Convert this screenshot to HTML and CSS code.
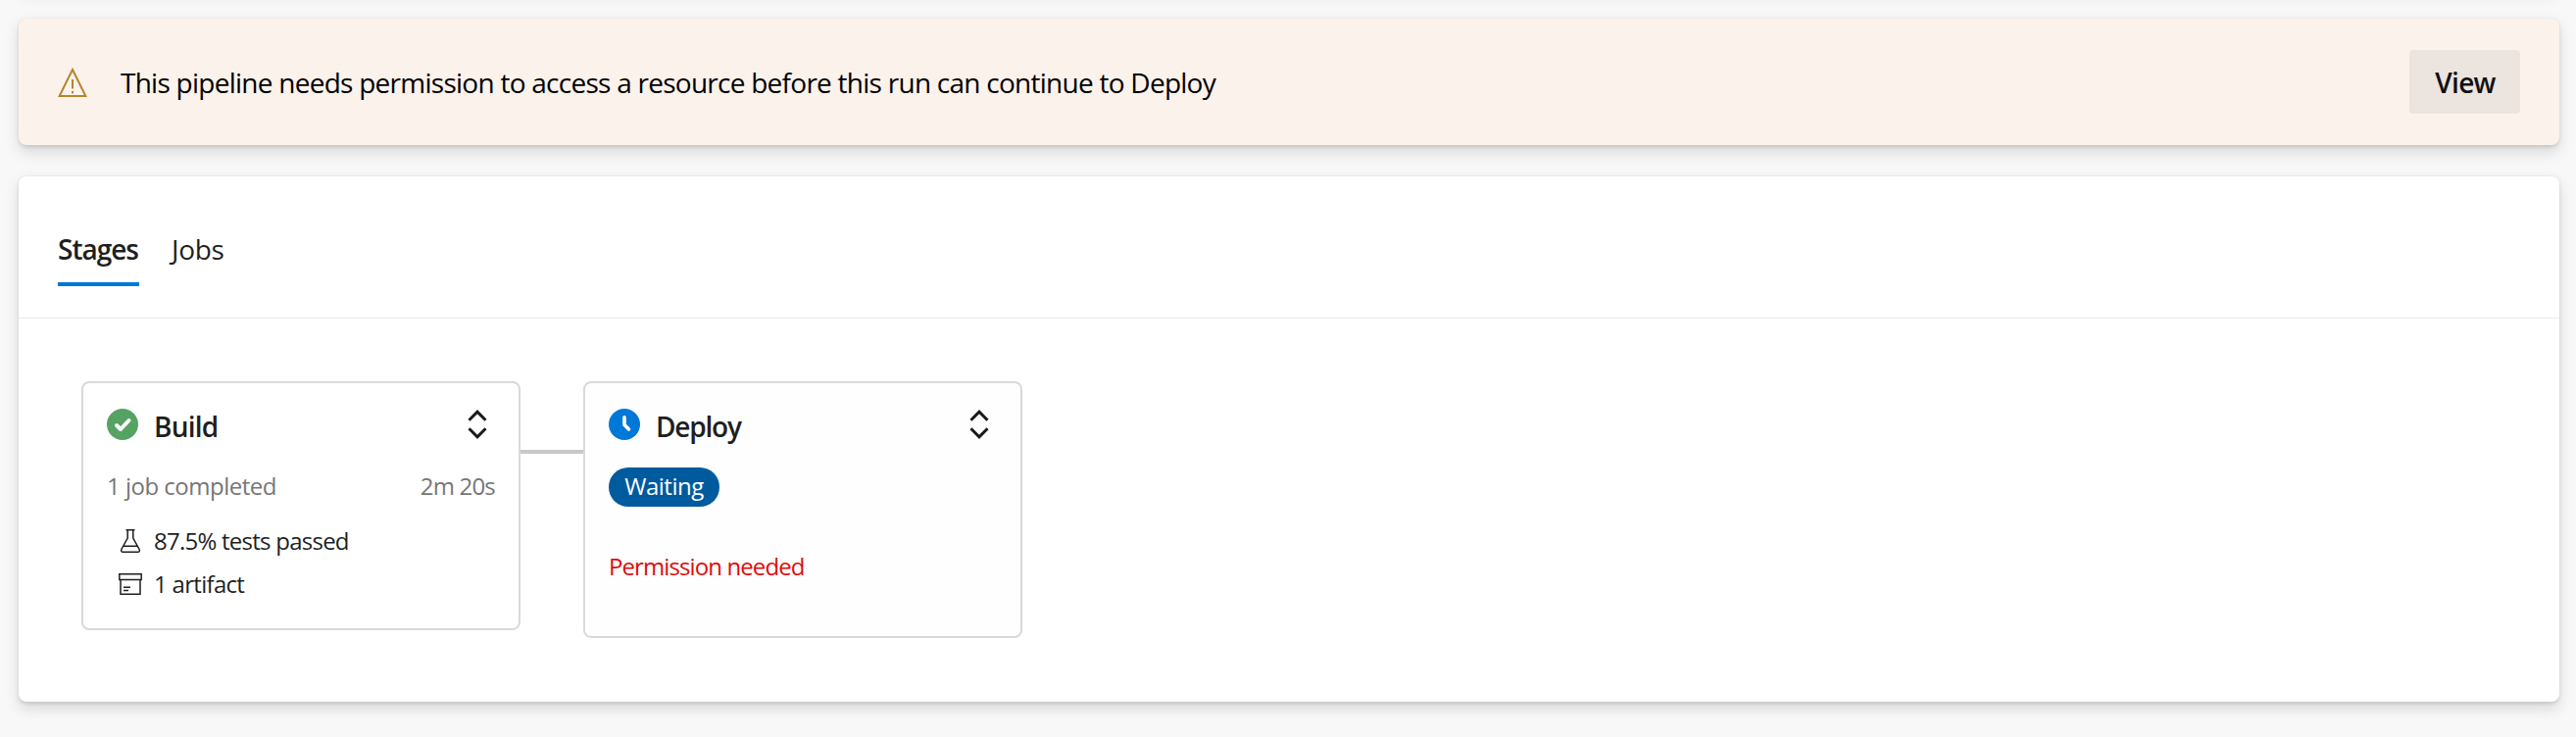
FILE: index.html
```html
<!DOCTYPE html>
<html lang="en">
<head>
<meta charset="utf-8">
<title>Pipeline run</title>
<link rel="stylesheet" href="styles.css">
</head>
<body>
<main class="page">
  <div class="card summary"></div>

  <section class="card banner">
    <svg class="banner-icon" viewBox="0 0 30 30" fill="none" stroke="#b5852a" stroke-width="2"><path d="M15 2 28.4 29H1.6Z"/><path d="M15 12v9.500M15 24v2.200"/></svg>
    <p class="banner-text">This pipeline needs permission to access a resource before this run can continue to Deploy</p>
    <button class="button" type="button"><span>View</span></button>
  </section>

  <section class="card run">
    <nav class="tabs">
      <a class="tab tab-selected">Stages</a>
      <a class="tab">Jobs</a>
    </nav>
    <div class="stages">
      <article class="stage stage-build">
        <header class="stage-head">
          <svg class="status" viewBox="0 0 32 32"><circle cx="16" cy="16" r="16" fill="#55a362"/><path d="M10 17l4 4 8.500-9" fill="none" stroke="#fff" stroke-width="4" stroke-linecap="round" stroke-linejoin="round"/></svg>
          <h2 class="stage-name name-build">Build</h2>
          <svg class="expand" viewBox="0 0 20 30"><path d="M1.500 10.700 10 2.200l8.500 8.500M1.500 19.300l8.500 8.500 8.500-8.500" fill="none" stroke="#1a1a1a" stroke-width="3"/></svg>
        </header>
        <div class="meta"><span class="meta-jobs">1 job completed</span><span class="meta-time">2m 20s</span></div>
        <ul class="facts">
          <li class="fact">
            <svg class="fact-icon" viewBox="0 0 24 24" fill="none" stroke="#1f1f1f" stroke-width="1.500"><path d="M7.500.8h9M9.200 1v8L2.900 20.500Q2 23.200 4.500 23.200h15Q22 23.200 21.100 20.500L14.800 9V1M5 17.200h14"/></svg>
            <span class="fact-tests">87.5% tests passed</span>
          </li>
          <li class="fact">
            <svg class="fact-icon" viewBox="0 0 24 24" fill="none" stroke="#1f1f1f" stroke-width="1.500"><path d="M.8 1.800h22.400v5.700H.8ZM2 7.500v14.700h20V7.500M5 15.300h7M5 18.500h5"/></svg>
            <span class="fact-artifact">1 artifact</span>
          </li>
        </ul>
      </article>
      <div class="connector"></div>
      <article class="stage stage-deploy">
        <header class="stage-head">
          <svg class="status" viewBox="0 0 32 32"><circle cx="16" cy="16" r="16" fill="#0078d7"/><path d="M16 8.800v7.700l4.500 4.500" fill="none" stroke="#fff" stroke-width="3.600" stroke-linecap="round" stroke-linejoin="round"/></svg>
          <h2 class="stage-name name-deploy">Deploy</h2>
          <svg class="expand" viewBox="0 0 20 30"><path d="M1.500 10.700 10 2.200l8.500 8.500M1.500 19.300l8.500 8.500 8.500-8.500" fill="none" stroke="#1a1a1a" stroke-width="3"/></svg>
        </header>
        <span class="pill">Waiting</span>
        <p class="warning">Permission needed</p>
      </article>
    </div>
  </section>
</main>
</body>
</html>
```
FILE: styles.css
```css
* { box-sizing: border-box; }

body {
  margin: 0;
  background: #f8f8f8;
  color: #1f1f1f;
  font-family: "Open Sans", "Noto Sans", sans-serif;
  font-size: 24px;
  overflow: hidden;
}

h2, p, ul { margin: 0; padding: 0; }

.page {
  height: 752px;
  padding: 0 17px 0 19px;
  display: flex;
  flex-direction: column;
}

.card {
  flex: none;
  background: #fff;
  border-radius: 8px;
  box-shadow: 0 6.4px 14.4px rgba(0, 0, 0, .132), 0 1.2px 3.6px rgba(0, 0, 0, .108);
}

.summary { height: 20px; margin: -33px 0 32px; }

.banner {
  height: 129px;
  margin-bottom: 32px;
  padding: 0 40px;
  display: flex;
  align-items: center;
  background: #fbf2ec;
}

.banner-icon { width: 30px; height: 30px; margin-right: 34px; }

.banner-text {
  flex: 1;
  padding-top: 1px;
  color: #000;
  font-size: 28px;
  line-height: 40px;
  letter-spacing: -.74px;
  white-space: nowrap;
}

.button {
  width: 113px;
  height: 65px;
  padding: 1px 0 0 1px;
  border: 0;
  border-radius: 4px;
  background: #ece4df;
  color: #111;
  font: 600 28px/40px "Open Sans", "Noto Sans", sans-serif;
  letter-spacing: -.7px;
}

.run { height: 536px; }

.tabs {
  height: 145px;
  padding: 53px 40px 0;
  display: flex;
  align-items: flex-start;
  gap: 33px;
  border-bottom: 1px solid #eaeaea;
}

.tab {
  height: 59px;
  padding-top: 1px;
  font-size: 28px;
  line-height: 40px;
  letter-spacing: -.3px;
  border-bottom: 4px solid transparent;
}

.tab-selected { width: 83px; border-color: #0078d7; font-weight: 600; letter-spacing: -1px; }

.stages { padding: 64px; display: flex; align-items: flex-start; }

.stage {
  width: 448px;
  padding: 26px 24px 0;
  border: 2px solid #d9d9d9;
  border-radius: 8px;
}

.stage-build { height: 254px; }
.stage-deploy { height: 262px; background: #fefefe; }

.connector { width: 64px; height: 4px; margin-top: 70px; background: #c8c8c8; }

.stage-head { height: 32px; margin-bottom: 28px; display: flex; align-items: center; }
.status { width: 32px; height: 32px; margin-right: 16px; }
.stage-name { flex: 1; padding-top: 3px; font-size: 28px; font-weight: 600; line-height: 32px; }
.name-build { letter-spacing: -.8px; }
.name-deploy { letter-spacing: -1.2px; }
.expand { width: 20px; height: 30px; margin-right: 8px; }

.meta {
  display: flex;
  justify-content: space-between;
  height: 53px;
  line-height: 38px;
  color: #767676;
}

.meta-jobs { letter-spacing: -.5px; }
.meta-time { letter-spacing: -.8px; }

.facts { list-style: none; padding-left: 12px; }
.fact { height: 44px; display: flex; align-items: center; gap: 12px; line-height: 44px; }
.fact-icon { width: 24px; height: 24px; }
.fact-tests { letter-spacing: -.75px; }
.fact-artifact { letter-spacing: -.7px; }

.pill {
  display: block;
  width: 113px;
  height: 40px;
  border-radius: 20px;
  background: #005a9e;
  color: #fff;
  line-height: 38px;
  letter-spacing: -.5px;
  text-align: center;
}

.warning { margin-top: 41px; line-height: 40px; letter-spacing: -.9px; color: #e00b0b; }
```
